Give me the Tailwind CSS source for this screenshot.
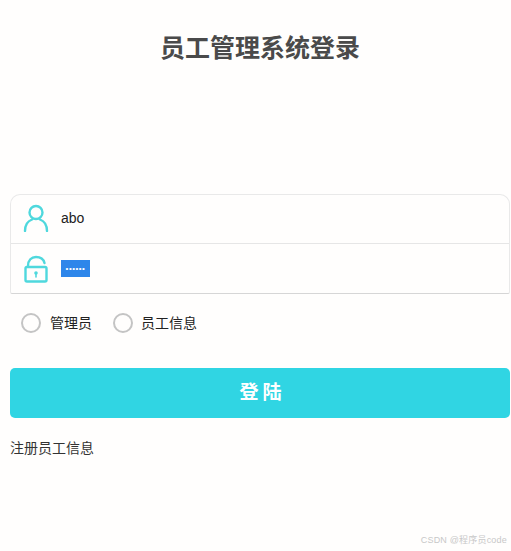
<!DOCTYPE html>
<html lang="zh">
<head>
  <meta charset="UTF-8" />
  <title>员工管理系统登录</title>
  <script src="https://cdn.jsdelivr.net/npm/@tailwindcss/browser@4"></script>
</head>
<body class="relative h-[551px] w-[511px] overflow-hidden bg-[#fffefd] font-['Liberation_Sans','Noto_Sans_CJK_SC',sans-serif] text-[#333]">
  <h1 class="pt-[31px] pl-[9px] text-center text-[25px] leading-[34px] font-bold text-[#4a4a4a]">员工管理系统登录</h1>

  <form class="mt-[129px] px-[10px]">
    <!-- inputs -->
    <div class="h-[100px] w-[500px] rounded-t-[10px] rounded-b-[2px] border border-[#e9e9e9] border-b-[#d6d6d6]">
      <div class="flex h-[49px] items-center border-b border-[#e6e6e6] pb-[2px] pl-[12px]">
        <svg class="h-[28px] w-[26px]" viewBox="0 0 26 28" fill="none" stroke="#4fd8dd" stroke-width="2.4" stroke-linecap="round">
          <circle cx="13" cy="8.5" r="6.5" />
          <path d="M2 27c0-6 3-10 7-11.500M24 27c0-6-3-10-7-11.500" />
        </svg>
        <span class="ml-[12px] text-[14px] text-[#222]">abo</span>
      </div>
      <div class="flex h-[49px] items-center pl-[12px]">
        <svg class="h-[28px] w-[26px]" viewBox="0 0 26 28" fill="none" stroke="#4fd8dd" stroke-width="2.4" stroke-linecap="round">
          <rect x="2.500" y="12" width="21" height="14.500" rx="1.500" />
          <path d="M5 11C5 5 8.500 2 13 2s7.500 2 8.500 6" />
          <circle cx="13" cy="18" r="1.800" fill="#4fd8dd" stroke="none" />
          <path d="M13 19v3" stroke-width="1.600" />
        </svg>
        <span class="ml-[12px] flex h-[17px] w-[29px] items-center justify-center bg-[#2e86ea] text-[8px] leading-none tracking-[0.5px] text-white">••••••</span>
      </div>
    </div>

    <!-- role -->
    <div class="mt-[18px] flex h-[22px] items-center pl-[11px] text-[14px] text-[#222]">
      <span class="h-[20px] w-[20px] rounded-full border-2 border-[#c4c4c4]"></span>
      <span class="ml-[9px]">管理员</span>
      <span class="ml-[21px] h-[20px] w-[20px] rounded-full border-2 border-[#c4c4c4]"></span>
      <span class="ml-[8px]">员工信息</span>
    </div>

    <button type="button" class="mt-[34px] flex h-[50px] w-[500px] items-center justify-center rounded-[5px] bg-[#30d5e3] pl-[5px] text-[19px] font-bold tracking-[4px] text-white">登陆</button>

    <p class="mt-[20px] text-[14px] leading-[20px] text-[#333]">注册员工信息</p>
  </form>

  <span class="absolute right-[4px] bottom-[5px] text-[9px] leading-[12px] tracking-[0.2px] text-[#c8c8c8]">CSDN @程序员code</span>
</body>
</html>
